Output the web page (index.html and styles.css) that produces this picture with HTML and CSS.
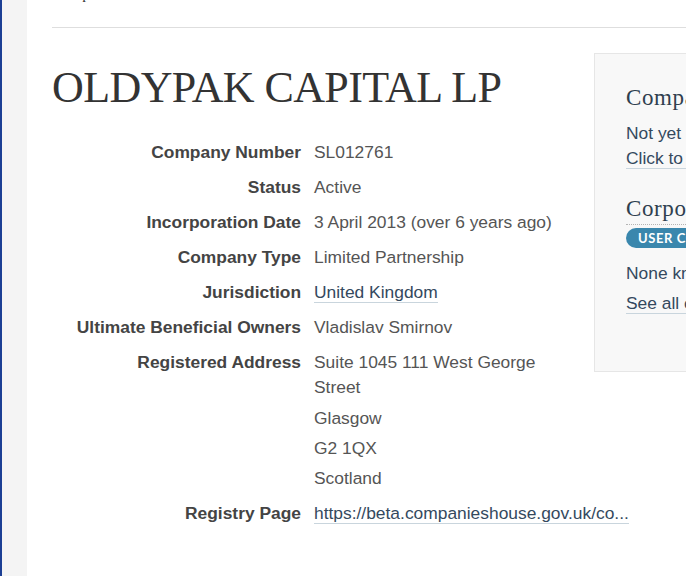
FILE: index.html
```html
<!DOCTYPE html>
<html lang="en">
<head>
<meta charset="utf-8">
<title>OLDYPAK CAPITAL LP</title>
<link rel="stylesheet" href="styles.css">
</head>
<body>
<div class="page">
  <div class="rail"></div>
  <main class="main">
    <div class="crumbs">Companies</div>
    <hr class="rule">
    <div class="layout">
      <section class="details">
        <h1 class="title">OLDYPAK CAPITAL LP</h1>
        <dl class="facts">
          <dt>Company Number</dt>
          <dd>SL012761</dd>
          <dt>Status</dt>
          <dd>Active</dd>
          <dt>Incorporation Date</dt>
          <dd>3 April 2013 (over 6 years ago)</dd>
          <dt>Company Type</dt>
          <dd>Limited Partnership</dd>
          <dt>Jurisdiction</dt>
          <dd><a class="link" href="#">United Kingdom</a></dd>
          <dt>Ultimate Beneficial Owners</dt>
          <dd>Vladislav Smirnov</dd>
          <dt>Registered Address</dt>
          <dd>
            <div class="addr">Suite 1045 111 West George Street</div>
            <div class="addr">Glasgow</div>
            <div class="addr">G2 1QX</div>
            <div class="addr">Scotland</div>
          </dd>
          <dt>Registry Page</dt>
          <dd><a class="link nowrap" href="#">https://beta.companieshouse.gov.uk/co...</a></dd>
        </dl>
      </section>
      <aside class="side">
        <h3 class="side-title">Company network</h3>
        <p class="side-text">Not yet determined<br><a class="link side-link" href="#">Click to research network</a></p>
        <h3 class="side-title dotted">Corporate grouping</h3>
        <span class="badge">User contributed</span>
        <p class="side-text none">None known. Add one now?</p>
        <p class="side-text"><a class="link side-link" href="#">See all corporate groupings</a></p>
      </aside>
    </div>
  </main>
</div>
</body>
</html>
```

FILE: styles.css
```css
html, body {
  margin: 0;
  padding: 0;
  overflow: hidden;
  background: #fff;
}

body {
  font-family: "Liberation Sans", Arial, sans-serif;
  font-size: 17.4px;
  line-height: 25px;
  color: #555;
}

.page {
  display: flex;
  min-height: 576px;
}

.rail {
  flex: 0 0 25px;
  border-left: 2px solid #1c3f94;
  background: #f4f4f4;
}

.main {
  flex: 1 1 auto;
  min-width: 0;
  padding-left: 25px;
  overflow: hidden;
}

.crumbs {
  font-family: "Liberation Serif", "Times New Roman", serif;
  font-size: 15.5px;
  line-height: 20px;
  color: #333;
  margin-top: -16px;
  height: 20px;
}

.rule {
  border: 0;
  border-top: 1px solid #dedede;
  height: 0;
  margin: 23px 0 0;
}

.layout {
  display: flex;
  gap: 20px;
  align-items: flex-start;
}

.details {
  flex: 0 0 522px;
  min-width: 0;
}

.title {
  font-family: "Liberation Serif", "Times New Roman", serif;
  font-weight: normal;
  font-size: 44px;
  letter-spacing: -0.6px;
  line-height: 50px;
  color: #333;
  margin: 35px 0 0;
  white-space: nowrap;
}

.facts {
  display: grid;
  grid-template-columns: 249px minmax(0, 1fr);
  column-gap: 13px;
  row-gap: 10px;
  margin: 27px 0 0;
}

.facts dt {
  font-weight: bold;
  color: #444;
  text-align: right;
  white-space: nowrap;
}

.facts dd {
  margin: 0;
  color: #555;
}

.addr + .addr {
  margin-top: 5px;
}

.addr:first-child + .addr {
  margin-top: 6px;
}

.link {
  color: #34495e;
  text-decoration: none;
  border-bottom: 1px solid #c9d5dd;
}

.nowrap {
  white-space: nowrap;
}

.side {
  flex: 0 0 320px;
  min-width: 320px;
  margin-top: 25px;
  background: #f8f8f8;
  border: 1px solid #e6e6e6;
  padding: 29px 0 55px 31px;
  white-space: nowrap;
  color: #34495e;
}

.side-title {
  font-family: "Liberation Serif", "Times New Roman", serif;
  font-weight: normal;
  font-size: 23px;
  letter-spacing: 0.6px;
  line-height: 30px;
  color: #2f3f4f;
  margin: 0 0 8px;
}

.side-title.dotted {
  margin: 23px 0 3px;
  border-bottom: 1px dotted #b5b5b5;
}

.side-text {
  margin: 0;
  color: #34495e;
}

.side-text.none {
  margin-top: 8px;
  margin-bottom: 5px;
}

.side-link {
  color: #34495e;
}

.badge {
  display: inline-block;
  background: #3a87ad;
  color: #fff;
  font-family: Lato, "Open Sans", sans-serif;
  font-weight: bold;
  font-size: 13px;
  letter-spacing: 0.6px;
  text-transform: uppercase;
  line-height: 20px;
  height: 20px;
  padding: 0 12px;
  border-radius: 10px;
  vertical-align: top;
}
```
